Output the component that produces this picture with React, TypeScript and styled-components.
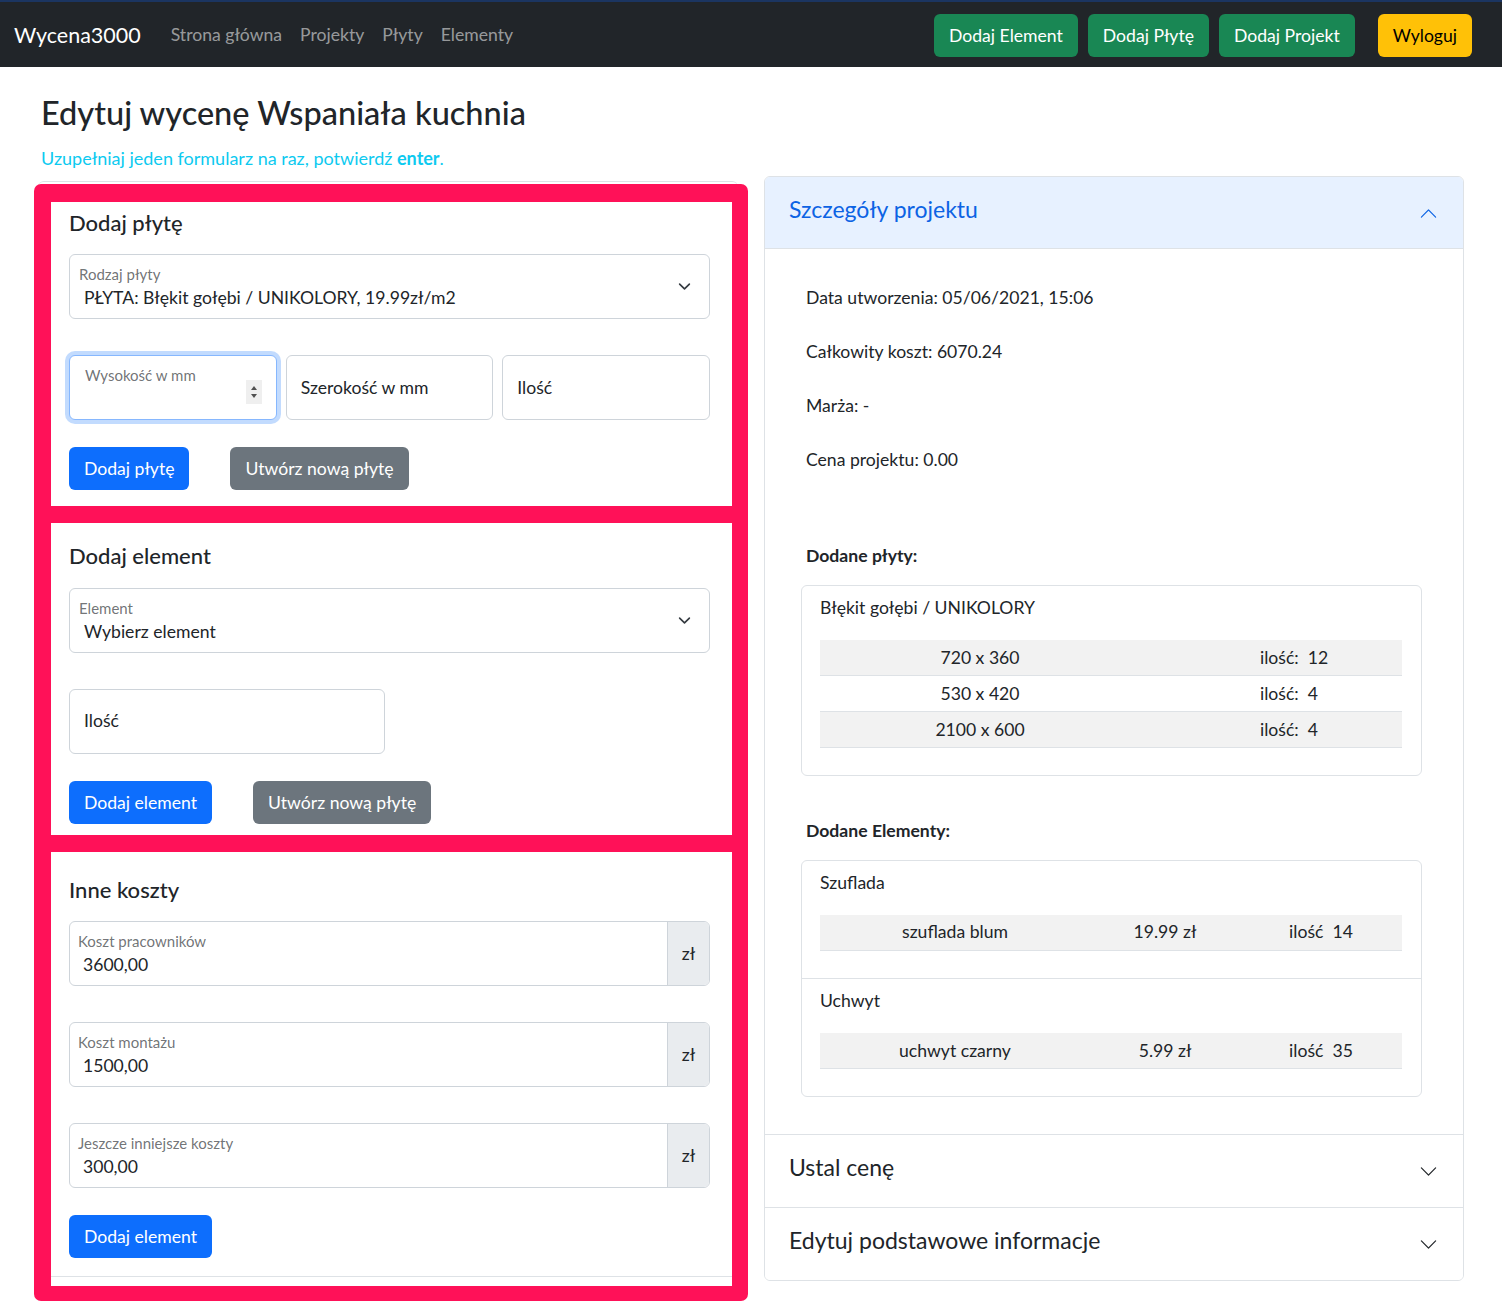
import { FC } from "react";
import styled, { createGlobalStyle } from "styled-components";

const GlobalStyle = createGlobalStyle`
  * { box-sizing: border-box; }
  body {
    margin: 0;
    font-family: Lato, "Liberation Sans", sans-serif;
    font-size: 17.6px;
    line-height: 1.5;
    color: #212529;
    background: #fff;
  }
`;

type Variant = "primary" | "secondary" | "success" | "warning";

const variantColors: Record<Variant, [string, string]> = {
  primary: ["#0d6efd", "#fff"],
  secondary: ["#6c757d", "#fff"],
  success: ["#198754", "#fff"],
  warning: ["#ffc107", "#000"],
};

const Chevron: FC<{ up?: boolean; color: string }> = ({ up, color }) => (
  <svg
    width="19"
    height="19"
    viewBox="0 0 16 16"
    style={{ transform: up ? "rotate(180deg)" : undefined }}
  >
    <path
      fill={color}
      fillRule="evenodd"
      d="M1.646 4.646a.5.5 0 0 1 .708 0L8 10.293l5.646-5.647a.5.5 0 0 1 .708.708l-6 6a.5.5 0 0 1-.708 0l-6-6a.5.5 0 0 1 0-.708z"
    />
  </svg>
);

const SelectArrow = () => (
  <svg width="13" height="13" viewBox="0 0 16 16">
    <path
      d="m2 5 6 6 6-6"
      fill="none"
      stroke="#343a40"
      strokeWidth="2"
      strokeLinecap="round"
      strokeLinejoin="round"
    />
  </svg>
);

const Spinner = () => (
  <svg width="16" height="24" viewBox="0 0 16 24">
    <rect width="16" height="24" fill="#efefef" />
    <path d="M5 10 L8 6 L11 10 Z" fill="#505050" />
    <path d="M5 14 L8 18 L11 14 Z" fill="#505050" />
  </svg>
);

const plates = [
  { size: "720 x 360", qty: 12 },
  { size: "530 x 420", qty: 4 },
  { size: "2100 x 600", qty: 4 },
];

const elements = [
  { group: "Szuflada", name: "szuflada blum", price: "19.99 zł", qty: 14 },
  { group: "Uchwyt", name: "uchwyt czarny", price: "5.99 zł", qty: 35 },
];

const costs = [
  { label: "Koszt pracowników", value: "3600,00" },
  { label: "Koszt montażu", value: "1500,00" },
  { label: "Jeszcze inniejsze koszty", value: "300,00" },
];

const App = () => {
  return (
    <>
      <GlobalStyle />
      <Navbar>
        <Brand>Wycena3000</Brand>
        <NavLink>Strona główna</NavLink>
        <NavLink>Projekty</NavLink>
        <NavLink>Płyty</NavLink>
        <NavLink>Elementy</NavLink>
        <NavRight>
          <Button $variant="success">Dodaj Element</Button>
          <Button $variant="success">Dodaj Płytę</Button>
          <Button $variant="success">Dodaj Projekt</Button>
          <LogoutButton $variant="warning">Wyloguj</LogoutButton>
        </NavRight>
      </Navbar>

      <Container>
        <Title>Edytuj wycenę Wspaniała kuchnia</Title>
        <Hint>
          Uzupełniaj jeden formularz na raz, potwierdź <b>enter</b>.
        </Hint>

        <Row>
          <LeftCard>
            <PinkFrame>
              <Section $top={8} $bottom={16}>
                <SectionTitle>Dodaj płytę</SectionTitle>
                <FieldStack>
                  <FloatBox>
                    <FloatContent>
                      <FloatLabel>Rodzaj płyty</FloatLabel>
                      <FloatValue>PŁYTA: Błękit gołębi / UNIKOLORY, 19.99zł/m2</FloatValue>
                    </FloatContent>
                    <SelectArrow />
                  </FloatBox>
                  <InputRow>
                    <FloatBox $focus>
                      <FloatContent>
                        <FloatLabel $indent={6}>Wysokość w mm</FloatLabel>
                      </FloatContent>
                      <SpinnerWrap>
                        <Spinner />
                      </SpinnerWrap>
                    </FloatBox>
                    <PlainBox>Szerokość w mm</PlainBox>
                    <PlainBox>Ilość</PlainBox>
                  </InputRow>
                </FieldStack>
                <ButtonRow>
                  <Button $variant="primary">Dodaj płytę</Button>
                  <Button $variant="secondary">Utwórz nową płytę</Button>
                </ButtonRow>
              </Section>

              <Section $top={20} $bottom={11}>
                <SectionTitle>Dodaj element</SectionTitle>
                <FieldStack>
                  <FloatBox>
                    <FloatContent>
                      <FloatLabel>Element</FloatLabel>
                      <FloatValue>Wybierz element</FloatValue>
                    </FloatContent>
                    <SelectArrow />
                  </FloatBox>
                  <HalfRow>
                    <PlainBox>Ilość</PlainBox>
                  </HalfRow>
                </FieldStack>
                <ButtonRow>
                  <Button $variant="primary">Dodaj element</Button>
                  <Button $variant="secondary">Utwórz nową płytę</Button>
                </ButtonRow>
              </Section>

              <Section $top={25} $bottom={0}>
                <SectionTitle>Inne koszty</SectionTitle>
                <FieldStack>
                  {costs.map((c) => (
                    <GroupBox key={c.label}>
                      <FloatContent>
                        <FloatLabel>{c.label}</FloatLabel>
                        <FloatValue>{c.value}</FloatValue>
                      </FloatContent>
                      <Addon>zł</Addon>
                    </GroupBox>
                  ))}
                </FieldStack>
                <ButtonRow>
                  <Button $variant="primary">Dodaj element</Button>
                </ButtonRow>
                <FooterLine />
              </Section>
            </PinkFrame>
          </LeftCard>

          <Accordion>
            <AccHeader $open>
              <AccTitle>Szczegóły projektu</AccTitle>
              <Chevron up color="#0c63e4" />
            </AccHeader>
            <AccBody>
              <InfoList>
                <Info>Data utworzenia: 05/06/2021, 15:06</Info>
                <Info>Całkowity koszt: 6070.24</Info>
                <Info>Marża: -</Info>
                <Info>Cena projektu: 0.00</Info>
              </InfoList>

              <SubTitle $mt={70}>Dodane płyty:</SubTitle>
              <ListCard>
                <ListItem>
                  <ItemTitle>Błękit gołębi / UNIKOLORY</ItemTitle>
                  <Table>
                    {plates.map((p, i) => (
                      <PlateRow key={p.size} $striped={i % 2 === 0}>
                        <Cell>{p.size}</Cell>
                        <QtyCell>
                          <span>ilość:</span>
                          <span>{p.qty}</span>
                        </QtyCell>
                      </PlateRow>
                    ))}
                  </Table>
                </ListItem>
              </ListCard>

              <SubTitle $mt={42}>Dodane Elementy:</SubTitle>
              <ListCard>
                {elements.map((e) => (
                  <ListItem key={e.group}>
                    <ItemTitle>{e.group}</ItemTitle>
                    <Table>
                      <ElementRow $striped>
                        <Cell>{e.name}</Cell>
                        <Cell>{e.price}</Cell>
                        <Cell>
                          ilość&nbsp;&nbsp;{e.qty}
                        </Cell>
                      </ElementRow>
                    </Table>
                  </ListItem>
                ))}
              </ListCard>
            </AccBody>
            <AccItem>
              <AccHeader>
                <AccTitle>Ustal cenę</AccTitle>
                <Chevron color="#212529" />
              </AccHeader>
            </AccItem>
            <AccItem>
              <AccHeader>
                <AccTitle>Edytuj podstawowe informacje</AccTitle>
                <Chevron color="#212529" />
              </AccHeader>
            </AccItem>
          </Accordion>
        </Row>
      </Container>
    </>
  );
};

const Navbar = styled.nav`
  display: flex;
  align-items: center;
  height: 67px;
  padding: 2px 30px 0 14px;
  background: #212529;
  border-top: 2px solid #1b3561;
`;
const Brand = styled.a`
  margin-right: 21px;
  font-size: 21.5px;
  color: #fff;
`;
const NavLink = styled.a`
  padding: 0 9px;
  color: rgba(255, 255, 255, 0.55);
`;
const NavRight = styled.div`
  display: flex;
  gap: 10px;
  margin-left: auto;
`;
const Button = styled.button<{ $variant: Variant }>`
  height: 43px;
  padding: 0 15px;
  border: none;
  border-radius: 6px;
  font-family: inherit;
  font-size: 17.6px;
  background: ${({ $variant }) => variantColors[$variant][0]};
  color: ${({ $variant }) => variantColors[$variant][1]};
`;
const LogoutButton = styled(Button)`
  margin-left: 13px;
`;

const Container = styled.main`
  width: 1452px;
  margin: 0 auto;
  padding: 0 13px 20px;
`;
const Title = styled.h2`
  margin: 26px 0 0 3px;
  font-size: 32.5px;
  font-weight: 500;
  line-height: 39px;
`;
const Hint = styled.p`
  margin: 13px 0 0 3px;
  font-size: 18px;
  color: #0dcaf0;
  line-height: 26px;
`;
const Row = styled.div`
  display: grid;
  grid-template-columns: 1fr 1fr;
  column-gap: 26px;
  align-items: start;
  margin-top: 5px;
`;
const LeftCard = styled.div`
  margin-top: 5px;
  border-top: 1px solid #dee2e6;
  border-radius: 6px;
`;
const PinkFrame = styled.div`
  display: flex;
  flex-direction: column;
  gap: 17px;
  margin: 2px -10px 0 -4px;
  padding: 18px 16px 15px 17px;
  background: #ff1158;
  border-radius: 7px;
`;
const Section = styled.section<{ $top: number; $bottom: number }>`
  padding: ${({ $top, $bottom }) => `${$top}px 22px ${$bottom}px 18px`};
  background: #fff;
`;
const SectionTitle = styled.h5`
  margin: 0 0 18px;
  font-size: 22px;
  font-weight: 500;
  line-height: 26.4px;
`;
const FieldStack = styled.div`
  display: flex;
  flex-direction: column;
  gap: 36px;
`;
const FloatBox = styled.div<{ $focus?: boolean }>`
  display: flex;
  align-items: center;
  height: 65px;
  padding: 0 18px 0 9px;
  background: #fff;
  border: 1px solid ${({ $focus }) => ($focus ? "#86b7fe" : "#ced4da")};
  border-radius: 6px;
  box-shadow: ${({ $focus }) => ($focus ? "0 0 0 4px rgba(13, 110, 253, 0.25)" : "none")};
`;
const FloatContent = styled.div`
  flex: 1;
  align-self: stretch;
  padding-top: 10px;
`;
const FloatLabel = styled.div<{ $indent?: number }>`
  padding-left: ${({ $indent }) => $indent ?? 0}px;
  font-size: 15px;
  line-height: 19px;
  color: rgba(33, 37, 41, 0.65);
`;
const FloatValue = styled.div`
  margin-top: 3px;
  padding-left: 5px;
  line-height: 22px;
`;
const SpinnerWrap = styled.div`
  display: flex;
  margin: 8px -4px 0 0;
`;
const InputRow = styled.div`
  display: grid;
  grid-template-columns: repeat(3, 1fr);
  gap: 9px;
`;
const HalfRow = styled.div`
  display: grid;
  grid-template-columns: 316px;
`;
const PlainBox = styled.div`
  display: flex;
  align-items: center;
  height: 65px;
  padding-left: 14px;
  border: 1px solid #ced4da;
  border-radius: 6px;
`;
const GroupBox = styled(FloatBox)`
  padding: 0;
  overflow: hidden;
  ${FloatContent} {
    padding-left: 8px;
  }
`;
const Addon = styled.div`
  display: flex;
  align-items: center;
  justify-content: center;
  align-self: stretch;
  width: 42px;
  background: #e9ecef;
  border-left: 1px solid #ced4da;
`;
const ButtonRow = styled.div`
  display: flex;
  gap: 41px;
  margin-top: 27px;
`;
const FooterLine = styled.div`
  height: 10px;
  margin: 18px -22px 0 -18px;
  border-top: 1px solid #dee2e6;
`;

const Accordion = styled.div`
  background: #fff;
  border: 1px solid #dee2e6;
  border-radius: 6px;
  overflow: hidden;
`;
const AccItem = styled.div`
  border-top: 1px solid #dee2e6;
`;
const AccHeader = styled.div<{ $open?: boolean }>`
  display: flex;
  align-items: center;
  justify-content: space-between;
  height: 72px;
  padding: 0 25px 0 24px;
  font-size: 23px;
  background: ${({ $open }) => ($open ? "#e7f1ff" : "#fff")};
  color: ${({ $open }) => ($open ? "#0c63e4" : "#212529")};
  box-shadow: ${({ $open }) => ($open ? "inset 0 -1px 0 #dee2e6" : "none")};
`;
const AccTitle = styled.span`
  margin-bottom: 8px;
`;
const AccBody = styled.div`
  padding: 36px 41px 37px 36px;
`;
const InfoList = styled.div`
  display: flex;
  flex-direction: column;
  gap: 27.6px;
`;
const Info = styled.p`
  margin: 0;
  padding-left: 5px;
  line-height: 26.4px;
`;
const SubTitle = styled.div<{ $mt: number }>`
  margin-top: ${({ $mt }) => $mt}px;
  padding-left: 5px;
  font-weight: 700;
  line-height: 26.4px;
`;
const ListCard = styled.div`
  margin-top: 15px;
  border: 1px solid #dee2e6;
  border-radius: 6px;
`;
const ListItem = styled.div`
  padding: 9px 19px 27px 18px;
  & + & {
    border-top: 1px solid #dee2e6;
  }
`;
const ItemTitle = styled.div`
  line-height: 26.4px;
`;
const Table = styled.div`
  margin-top: 19px;
`;
const TableRow = styled.div<{ $striped?: boolean }>`
  display: grid;
  align-items: center;
  height: 36px;
  background: ${({ $striped }) => ($striped ? "#f2f2f2" : "#fff")};
  border-bottom: 1px solid #dee2e6;
`;
const PlateRow = styled(TableRow)`
  grid-template-columns: 320px 1fr;
`;
const ElementRow = styled(TableRow)`
  grid-template-columns: 270px 150px 1fr;
`;
const Cell = styled.div`
  text-align: center;
`;
const QtyCell = styled.div`
  display: flex;
  gap: 9px;
  padding-left: 120px;
`;

export default App;
